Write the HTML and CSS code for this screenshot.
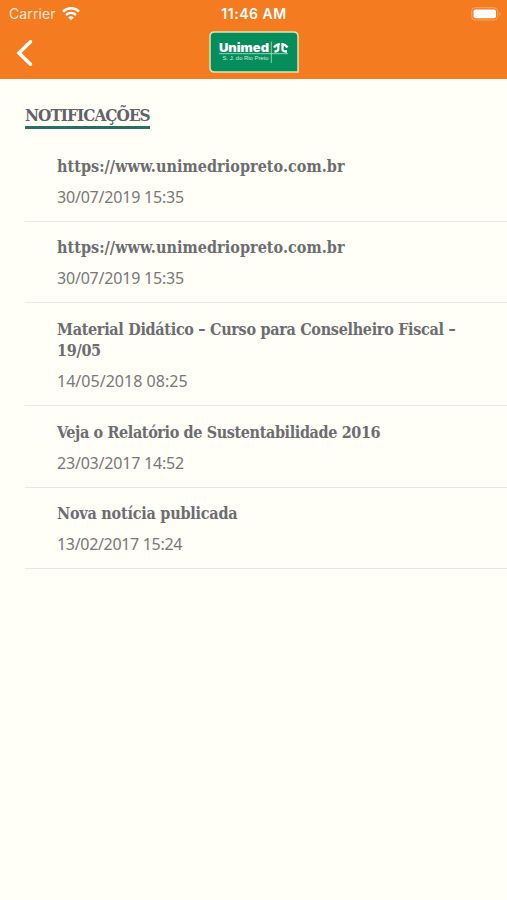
FILE: index.html
```html
<!DOCTYPE html>
<html lang="pt-BR">
<head>
<meta charset="utf-8">
<meta name="viewport" content="width=device-width, initial-scale=1">
<title>Notificações</title>
<link rel="stylesheet" href="styles.css">
</head>
<body>
<header class="header">
  <div class="status">
    <div class="carrier"><span>Carrier</span>
      <svg class="wifi" width="18" height="14" viewBox="0 0 18 14" fill="none" stroke="#fff" stroke-width="2.4"><path d="M1 4.600C5.600.2 12.400.2 17 4.600"/><path d="M4 8c2.900-2.700 7.100-2.700 10 0"/><path d="M9 13.200 6.200 10.400c1.600-1.500 4-1.500 5.600 0Z" fill="#fff" stroke="none"/></svg>
    </div>
    <div class="time">11:46 AM</div>
    <svg class="battery" width="31" height="14" viewBox="0 0 31 14"><rect x=".7" y=".7" width="26" height="12.300" rx="3.500" fill="none" stroke="#f9a465"/><rect x="2.500" y="2.500" width="22.500" height="8.800" rx="2" fill="#fff"/><path d="M28.500 5v4c1.600-.7 1.600-3.300 0-4Z" fill="#f9a465"/></svg>
  </div>
  <nav class="nav">
    <svg class="back" width="18" height="28" viewBox="0 0 18 28" fill="none" stroke="#fff" stroke-width="3.500" stroke-linecap="round"><path d="M14.500 2.800 3 14l11.500 11.200"/></svg>
    <div class="logo">
      <svg width="90" height="42" viewBox="0 0 90 42">
        <path d="M5.500 1h79q4.500 0 4.500 4.500V41H5.500Q1 41 1 36.500v-31Q1 1 5.500 1Z" fill="#058e5b" stroke="#d9e8ba" stroke-width="1.500"/>
        <text class="brand" x="10" y="21" textLength="50" lengthAdjust="spacingAndGlyphs">Unimed</text>
        <text class="city" x="13.500" y="29" textLength="46" lengthAdjust="spacingAndGlyphs">S. J. do Rio Preto</text>
        <path d="M10 22.700h69M62.300 10.500v21.500" stroke="#b9dfc8" stroke-width=".8"/>
        <path d="M65 16.500q2-3.200 5.500-3.200M69.300 13v5q0 2.500-3.800 2.500M73.500 12v6.500q0 2 4.500 2M73.500 13.500q3 0 5 3M70 12.200v2" fill="none" stroke="#fff" stroke-width="2.300"/>
      </svg>
    </div>
  </nav>
</header>
<main>
  <h1 class="title">NOTIFICAÇÕES</h1>
  <ul class="list">
    <li class="item"><h2 class="url">https://www.unimedriopreto.com.br</h2><time>30/07/2019 15:35</time></li>
    <li class="item"><h2 class="url">https://www.unimedriopreto.com.br</h2><time>30/07/2019 15:35</time></li>
    <li class="item"><h2 class="course">Material Didático – Curso para Conselheiro Fiscal –<br>19/05</h2><time class="wide">14/05/2018 08:25</time></li>
    <li class="item"><h2 class="report">Veja o Relatório de Sustentabilidade 2016</h2><time>23/03/2017 14:52</time></li>
    <li class="item"><h2 class="news">Nova notícia publicada</h2><time class="narrow">13/02/2017 15:24</time></li>
  </ul>
</main>
</body>
</html>
```
FILE: styles.css
```css
* { box-sizing: border-box; }
body { margin: 0; min-height: 900px; background: #fffef7; color: #6c6d70; font-family: "Noto Sans", sans-serif; }
.header { height: 79px; background: #f47b20; color: #fff; }
.status { height: 28px; display: grid; grid-template-columns: 1fr auto 1fr; align-items: center; padding: 0 5px 0 9px; font: 14px/28px Inter, sans-serif; }
.carrier { display: flex; align-items: center; gap: 6px; color: #ffe9d8; letter-spacing: .1px; }
.time { margin-right: 3px; font-weight: 600; font-size: 14px; letter-spacing: .55px; }
.battery { justify-self: end; }
.nav { height: 51px; display: grid; grid-template-columns: 1fr 90px 1fr; align-items: start; margin-right: 15px; padding: 3px 0 0 16px; }
.back { margin-top: 8px; }
.logo { height: 42px; }
.logo svg { display: block; }
.brand { font: 900 12px Inter, sans-serif; fill: #fff; }
.city { font: 6px "Liberation Sans", sans-serif; fill: #d5eddf; }
.title { width: 125px; height: 26px; margin: 24px 0 11px 25px; border-bottom: 3px solid #28705f; font: bold 17px/24px "DejaVu Serif Condensed", "DejaVu Serif", serif; font-stretch: condensed; letter-spacing: -.95px; color: #606367; white-space: nowrap; }
.list { list-style: none; margin: 0 0 0 25px; padding: 0; }
.item { padding: 15.500px 0 11px 32px; border-bottom: 1px solid #e9e9e5; }
.item h2 { margin: 0 0 7.500px; font: bold 16px/21.500px "DejaVu Serif Condensed", "DejaVu Serif", serif; font-stretch: condensed; white-space: nowrap; }
.item .url { letter-spacing: .05px; }
.item .course { letter-spacing: -.3px; }
.item .report { letter-spacing: -.37px; }
.item .news { letter-spacing: -.22px; }
.item time { display: block; font-size: 16px; line-height: 25.500px; margin-bottom: -.5px; letter-spacing: -.2px; color: #77787a; }
.item .wide { letter-spacing: .03px; }
.item .narrow { letter-spacing: -.32px; }
```
